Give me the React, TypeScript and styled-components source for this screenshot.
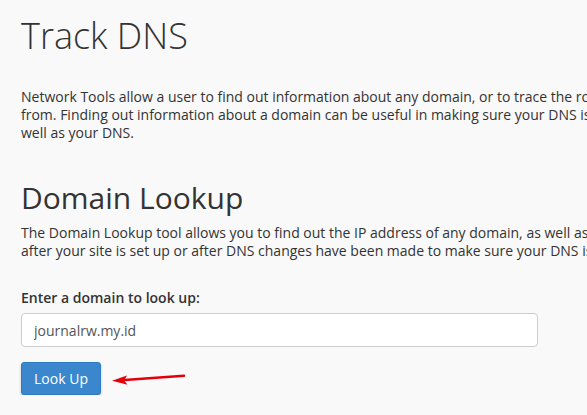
import React from "react";
import styled, { createGlobalStyle } from "styled-components";

const GlobalStyle = createGlobalStyle`
  html, body {
    margin: 0;
    padding: 0;
    background: #f9f9f9;
    overflow: hidden;
  }
  body {
    font-family: "Open Sans", "Liberation Sans", sans-serif;
    color: #333;
  }
`;

const Page = styled.main`
  padding: 16px 0 0 21px;
  width: 1400px;
`;

const Title = styled.h1`
  margin: 0;
  font-size: 36px;
  line-height: 40px;
  font-weight: 300;
  color: #333;
`;

const Text = styled.p<{ $top: number }>`
  margin: ${(p) => p.$top}px 0 0;
  font-size: 14px;
  line-height: 18px;
  white-space: nowrap;
`;

const Heading = styled.h2`
  margin: 39px 0 0;
  font-size: 30px;
  line-height: 34px;
  font-weight: 400;
  color: #333;
`;

const Form = styled.form`
  display: flex;
  flex-direction: column;
  align-items: flex-start;
  margin-top: 29px;
`;

const Label = styled.label`
  font-size: 14px;
  line-height: 18px;
  font-weight: 600;
  color: #333;
`;

const Input = styled.input`
  box-sizing: border-box;
  margin-top: 6px;
  width: 517px;
  height: 34px;
  padding: 0 12px;
  border: 1px solid #ccc;
  border-radius: 4px;
  background: #fff;
  font-family: inherit;
  font-size: 14px;
  color: #555;
  outline: none;
`;

const ActionRow = styled.div`
  display: flex;
  align-items: center;
  gap: 10px;
  margin-top: 15px;
`;

const Button = styled.button`
  box-sizing: border-box;
  width: 80px;
  height: 33px;
  border: 1px solid #2f7bbf;
  border-radius: 3px;
  background: #3a87cd;
  color: #fff;
  font-family: inherit;
  font-size: 14px;
  box-shadow: 0 2px 3px rgba(0, 0, 0, 0.2);
  cursor: pointer;
`;

const Arrow = () => (
  <svg width="76" height="14" viewBox="0 0 76 14" aria-hidden="true">
    <path d="M10 8.2 L73 3.8" stroke="#e3000b" strokeWidth="2.4" strokeLinecap="round" />
    <path d="M1 8.8 L16 3.6 L13 8.4 L16.6 12.8 Z" fill="#e3000b" />
  </svg>
);

export default function App() {
  return (
    <>
      <GlobalStyle />
      <Page>
        <Title>Track DNS</Title>
        <Text $top={32}>
          Network Tools allow a user to find out information about any domain, or to trace the route from the server your site is on to the computer you are accessing cPanel
          <br />
          from. Finding out information about a domain can be useful in making sure your DNS is set up properly as you will find out information about your IP address as
          <br />
          well as your DNS.
        </Text>
        <Heading>Domain Lookup</Heading>
        <Text $top={9}>
          The Domain Lookup tool allows you to find out the IP address of any domain, as well as the DNS information about that domain. This can be a very useful tool right
          <br />
          after your site is set up or after DNS changes have been made to make sure your DNS is set up properly.
        </Text>
        <Form onSubmit={(e) => e.preventDefault()}>
          <Label htmlFor="domain">Enter a domain to look up:</Label>
          <Input id="domain" defaultValue="journalrw.my.id" />
          <ActionRow>
            <Button type="submit">Look Up</Button>
            <Arrow />
          </ActionRow>
        </Form>
      </Page>
    </>
  );
}
